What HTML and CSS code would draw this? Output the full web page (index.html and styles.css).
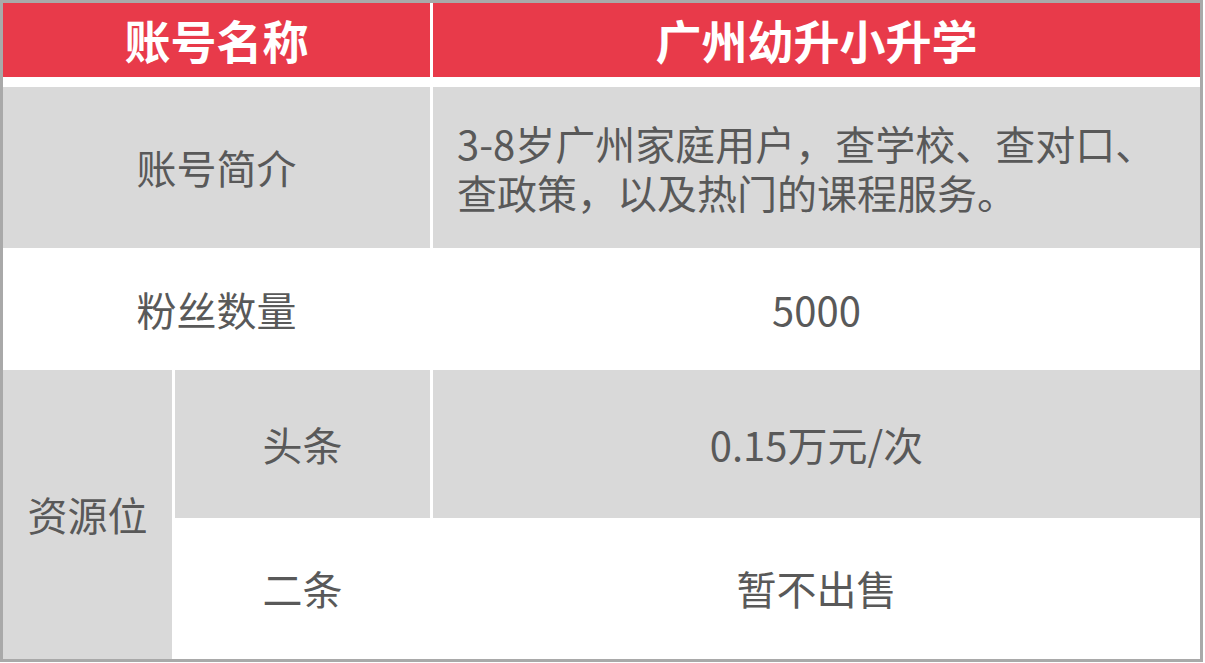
FILE: index.html
```html
<!DOCTYPE html>
<html lang="zh-CN">
<head>
<meta charset="utf-8">
<title>账号信息</title>
<link rel="stylesheet" href="styles.css">
</head>
<body>
<div class="table">
  <div class="cell head span2">账号名称</div>
  <div class="cell head">广州幼升小升学</div>

  <div class="cell gray span2">账号简介</div>
  <div class="cell gray intro">3-8岁广州家庭用户，查学校、查对口、<br>查政策，以及热门的课程服务。</div>

  <div class="cell white span2">粉丝数量</div>
  <div class="cell white">5000</div>

  <div class="cell gray res">资源位</div>
  <div class="cell gray">头条</div>
  <div class="cell gray">0.15万元/次</div>

  <div class="cell white">二条</div>
  <div class="cell white">暂不出售</div>
</div>
</body>
</html>
```
FILE: styles.css
```css
html, body {
  margin: 0;
  padding: 0;
  background: #ffffff;
}

.table {
  box-sizing: border-box;
  width: 1203px;
  height: 662px;
  border: 3px solid #a9a9a9;
  background: #ffffff;
  display: grid;
  grid-template-columns: 169px 255px 767px;
  grid-template-rows: 84px 161px 122px 148px 141px;
  column-gap: 3px;
  font-family: "Noto Sans CJK SC", "Noto Sans", sans-serif;
  font-size: 40px;
  color: #595959;
}

.cell {
  display: flex;
  align-items: center;
  justify-content: center;
  box-sizing: border-box;
  line-height: 49px;
}

.span2 {
  grid-column: span 2;
}

.head {
  background: #e83a4a;
  color: #ffffff;
  font-weight: 700;
  font-size: 46px;
  border-bottom: 10px solid #ffffff;
  padding-bottom: 2px;
}

.gray {
  background: #d9d9d9;
}

.white {
  background: #ffffff;
}

.intro {
  justify-content: flex-start;
  padding-left: 24px;
}

.res {
  grid-row: span 2;
}
```
